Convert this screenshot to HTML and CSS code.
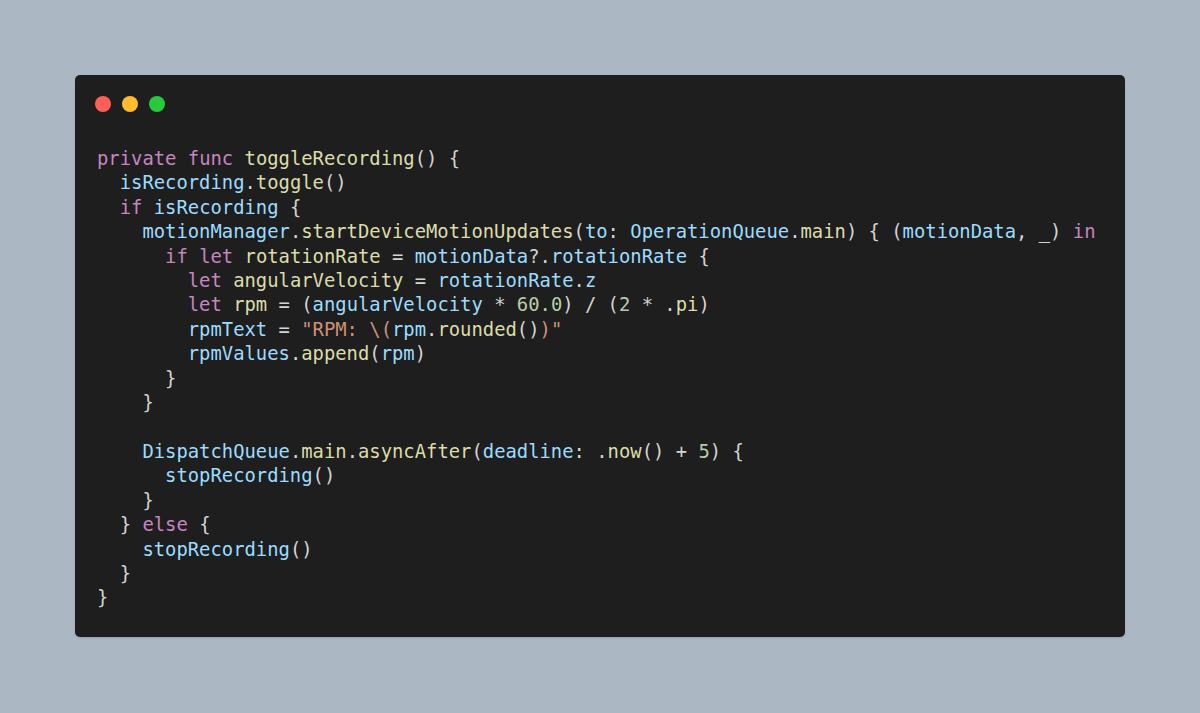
FILE: index.html
```html
<!DOCTYPE html>
<html>
<head>
<meta charset="utf-8">
<link rel="stylesheet" href="styles.css">
</head>
<body>
<div class="card">
  <div class="dots">
    <span class="dot red"></span>
    <span class="dot yellow"></span>
    <span class="dot green"></span>
  </div>
<pre class="code"><span class="k">private</span> <span class="k">func</span> <span class="f">toggleRecording</span>() {
  <span class="v">isRecording</span>.<span class="f">toggle</span>()
  <span class="k">if</span> <span class="v">isRecording</span> {
    <span class="v">motionManager</span>.<span class="f">startDeviceMotionUpdates</span>(<span class="v">to</span>: <span class="v">OperationQueue</span>.<span class="f">main</span>) { (<span class="v">motionData</span>, _) <span class="k">in</span>
      <span class="k">if</span> <span class="k">let</span> <span class="f">rotationRate</span> = <span class="v">motionData</span>?.<span class="v">rotationRate</span> {
        <span class="k">let</span> <span class="f">angularVelocity</span> = <span class="v">rotationRate</span>.<span class="v">z</span>
        <span class="k">let</span> <span class="f">rpm</span> = (<span class="v">angularVelocity</span> * <span class="n">60.0</span>) / (<span class="n">2</span> * .<span class="f">pi</span>)
        <span class="v">rpmText</span> = <span class="s">"RPM: \(</span><span class="v">rpm</span>.<span class="f">rounded</span>()<span class="s">)"</span>
        <span class="v">rpmValues</span>.<span class="f">append</span>(<span class="v">rpm</span>)
      }
    }

    <span class="v">DispatchQueue</span>.<span class="f">main</span>.<span class="f">asyncAfter</span>(<span class="v">deadline</span>: .<span class="f">now</span>() + <span class="n">5</span>) {
      <span class="v">stopRecording</span>()
    }
  } <span class="k">else</span> {
    <span class="v">stopRecording</span>()
  }
}</pre>
</div>
</body>
</html>
```

FILE: styles.css
```css
html, body {
  margin: 0;
  padding: 0;
}
body {
  background: #abb8c3;
  padding: 75px;
  height: 713px;
  box-sizing: border-box;
  overflow: hidden;
}
.card {
  width: 1050px;
  height: 562px;
  box-sizing: border-box;
  background: #1e1e1e;
  border-radius: 5px;
  padding: 21px 20px 0 20px;
  box-shadow: 0 1px 2px rgba(0,0,0,0.15);
}
.dots {
  display: flex;
  gap: 11px;
  height: 16px;
}
.dot {
  width: 16px;
  height: 16px;
  border-radius: 50%;
  display: block;
}
.red { background: #ff5f56; }
.yellow { background: #ffbd2e; }
.green { background: #27c93f; }
.code {
  margin: 35px 0 0 2px;
  font-family: "DejaVu Sans Mono", "Liberation Mono", monospace;
  font-size: 18.85px;
  line-height: 24.4px;
  color: #d4d4d4;
  white-space: pre;
}
.k { color: #c586c0; }
.v { color: #9cdcfe; }
.f { color: #dcdcaa; }
.s { color: #ce9178; }
.n { color: #b5cea8; }
```
